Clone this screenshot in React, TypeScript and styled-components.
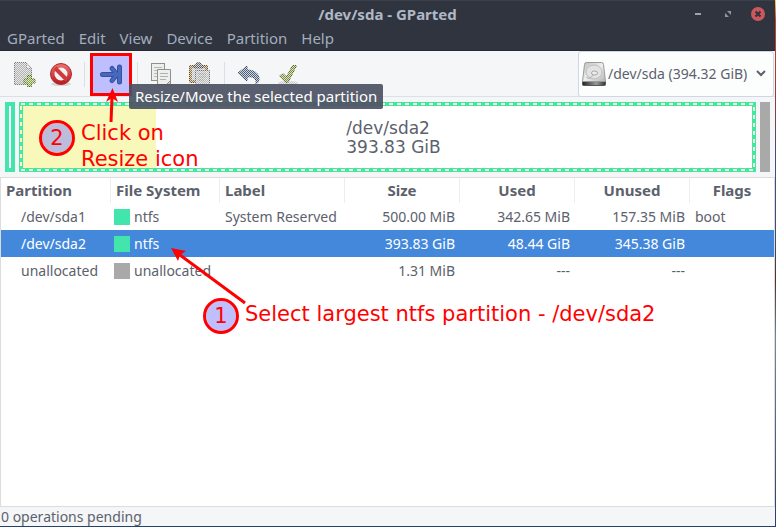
import React from "react";
import styled, { createGlobalStyle } from "styled-components";

const GREEN = "#42e5ac";
const GREY = "#a9a9a9";
const RED = "#ff0000";
const TEXT = "#5c616c";

const GlobalStyle = createGlobalStyle`
  *, *::before, *::after { box-sizing: border-box; }
  body {
    margin: 0;
    background: linear-gradient(#f4d95a 0, #c8452c 20px, #a33a2a 90px, #4a4a80 150px, #35507e 240px, #5f2a2a 280px, #6d8aa0 340px, #24406b 100%);
    font-family: "Noto Sans", "Open Sans", sans-serif;
    font-size: 14px;
    color: ${TEXT};
  }
  button, select { font: inherit; color: inherit; }
`;

const Window = styled.div`
  position: relative;
  display: flex;
  flex-direction: column;
  height: 100vh;
  border: 0 solid transparent;
  border-width: 0 1px 1px 0;
  background: #f5f6f7 padding-box;
  overflow: hidden;
`;

const TitleBar = styled.header`
  display: grid;
  grid-template-columns: 1fr auto 1fr;
  align-items: center;
  height: 28px;
  flex: none;
  padding-bottom: 2px;
  background: #2f343f;
  border-top: 1px solid #3a404c;
`;

const Title = styled.h1`
  grid-column: 2;
  margin: 0;
  font-size: 15px;
  line-height: 20px;
  font-weight: 700;
  color: #afb8c5;
`;

const WindowControls = styled.div`
  display: flex;
  justify-content: flex-end;
  gap: 14px;
  padding-right: 9px;
`;

const ControlButton = styled.button`
  display: block;
  width: 16px;
  height: 16px;
  padding: 0;
  border: 0;
  background: none;
  svg { display: block; }
`;

const MenuBar = styled.nav`
  display: flex;
  gap: 14px;
  height: 23px;
  flex: none;
  padding: 0 7px 2px;
  background: #2f343f;
  border-bottom: 1px solid #262a33;
  font-size: 15px;
`;

const MenuItem = styled.button`
  padding: 0;
  border: 0;
  background: none;
  color: #a3adbd;
  line-height: 20px;
`;

const Toolbar = styled.div`
  display: flex;
  align-items: flex-end;
  height: 46px;
  flex: none;
  padding: 0 0 0 3px;
  border-bottom: 1px solid #dbdfe7;
`;

const ToolButton = styled.button<{ $marked?: boolean }>`
  display: grid;
  place-items: center;
  width: ${(p) => (p.$marked ? 42 : 38)}px;
  height: 43px;
  padding: 0;
  border: ${(p) => (p.$marked ? `3px solid ${RED}` : "0")};
  background: ${(p) => (p.$marked ? "#bfbfff" : "none")};
  svg { display: block; overflow: visible; }
`;

const ToolDivider = styled.div`
  width: 1px;
  height: 25px;
  margin: 0 5px 9px;
  background: #dcdfe3;
`;

const TipAnchor = styled.div`
  position: relative;
`;

const Tooltip = styled.div`
  position: absolute;
  z-index: 2;
  top: 31px;
  left: 39px;
  padding: 0 6px;
  border-radius: 2px;
  background: rgba(75, 81, 98, 0.92);
  color: #ffffff;
  font-size: 15px;
  line-height: 25px;
  white-space: nowrap;
`;

const DevicePicker = styled.label`
  display: flex;
  align-items: center;
  align-self: stretch;
  margin: 0 1px -1px auto;
  padding: 0 6px 0 3px;
  border: 1px solid #cfd6e6;
  border-radius: 3px;
  background: #fcfefe;
  svg { display: block; }
`;

const DeviceSelect = styled.select`
  appearance: none;
  padding: 0 7px 0 1px;
  border: 0;
  background: none;
  line-height: 20px;
`;

const DiskMap = styled.section`
  position: relative;
  display: flex;
  gap: 4px;
  height: 80px;
  flex: none;
  padding: 5px;
`;

const SmallPartition = styled.div<{ $color: string; $solid?: boolean }>`
  width: 10px;
  flex: none;
  border: 4px solid ${(p) => p.$color};
  background: ${(p) => (p.$solid ? p.$color : "#ffffff")};
`;

const SelectedPartition = styled.div`
  position: relative;
  display: grid;
  flex: 1;
  border: 4px solid ${GREEN};
  background: #ffffff;
  > * { grid-area: 1 / 1; }
`;

const UsedSpace = styled.div`
  width: 18.2%;
  background: #f8f8ba;
`;

const PartitionLabel = styled.div`
  place-self: center;
  padding: 2px 0 0 12px;
  font-family: "DejaVu Sans", sans-serif;
  font-size: 17px;
  line-height: 19px;
`;

const SelectionDashes = styled.svg`
  position: absolute;
  inset: -4px;
  width: calc(100% + 8px);
  height: calc(100% + 8px);
  rect {
    x: 2px;
    y: 2px;
    width: calc(100% - 4px);
    height: calc(100% - 4px);
  }
`;

const TableFrame = styled.main`
  position: relative;
  flex: 1;
  min-height: 0;
  border: 1px solid #dcdcdc;
  background: #ffffff;
`;

const PartitionTable = styled.table`
  width: 100%;
  table-layout: fixed;
  border-collapse: separate;
  border-spacing: 0;
  line-height: 20px;
`;

const Column = styled.col<{ $width?: number }>`
  width: ${(p) => (p.$width ? `${p.$width}px` : "auto")};
`;

const HeaderCell = styled.th<{ $center?: boolean }>`
  height: 25px;
  padding: 0 5px 2px;
  border-right: 1px solid #ededed;
  text-align: ${(p) => (p.$center ? "center" : "left")};
  font-size: 15px;
  font-weight: 700;
  &:last-child { border-right: 0; }
`;

const Row = styled.tr<{ $selected?: boolean }>`
  height: 27px;
  color: ${(p) => (p.$selected ? "#ffffff" : TEXT)};
  background: ${(p) => (p.$selected ? "#4488dc" : "none")};
`;

const Cell = styled.td<{ $right?: boolean; $indent?: boolean }>`
  padding: 0 5px 0 ${(p) => (p.$indent ? 20 : 5)}px;
  text-align: ${(p) => (p.$right ? "right" : "left")};
  white-space: nowrap;
`;

const FileSystem = styled.div`
  display: flex;
  align-items: center;
  gap: 4px;
  margin-left: -2px;
`;

const Swatch = styled.span<{ $color: string }>`
  width: 16px;
  height: 16px;
  flex: none;
  background: ${(p) => p.$color};
`;

const StatusBar = styled.footer`
  height: 19px;
  flex: none;
  padding-left: 1px;
  line-height: 20px;
`;

const Arrows = styled.svg`
  position: absolute;
  z-index: 3;
  top: 0;
  left: 0;
  pointer-events: none;
`;

const Callout = styled.div<{ $x: number; $y: number; $single?: boolean }>`
  position: absolute;
  z-index: 2;
  left: ${(p) => p.$x}px;
  top: ${(p) => p.$y}px;
  display: flex;
  align-items: ${(p) => (p.$single ? "center" : "flex-start")};
  gap: 6px;
  color: ${RED};
  font-family: "DejaVu Sans", sans-serif;
  font-size: 21px;
  line-height: 26px;
  white-space: nowrap;
`;

const CalloutText = styled.span`
  padding-bottom: 4px;
`;

const StepNumber = styled.span`
  display: grid;
  place-items: center;
  width: 36px;
  height: 36px;
  border: 3px solid ${RED};
  border-radius: 50%;
  background: rgba(128, 128, 255, 0.5);
  background-clip: padding-box;
`;

const Icon = ({ children }: { children: React.ReactNode }) => (
  <svg width="26" height="25" viewBox="0 0 26 25" aria-hidden="true">{children}</svg>
);

/* Every other pixel is cut out of icons whose action is unavailable. */
const StippleDefs = () => (
  <defs>
    <pattern id="checks" width="2" height="2" patternUnits="userSpaceOnUse">
      <rect width="2" height="2" fill="#333333" />
      <rect width="1" height="1" fill="#ffffff" />
      <rect x="1" y="1" width="1" height="1" fill="#ffffff" />
    </pattern>
    <mask id="stipple" maskUnits="userSpaceOnUse" x="0" y="0" width="27" height="26">
      <rect width="27" height="26" fill="url(#checks)" />
    </mask>
  </defs>
);

const NewIcon = () => (
  <Icon>
    <StippleDefs />
    <g mask="url(#stipple)">
      <path d="M5.500 .500h12l5 6v16h-17z" fill="#b2b2b2" stroke="#7a7a7a" />
      <path d="M17.500 .500v6h5z" fill="#e8e8e8" stroke="#909090" />
      <path d="M18.500 13.500h4v3.500h3.500v4h-3.500v3.500h-4v-3.500h-3.500v-4h3.500z" fill="#86a63a" stroke="#4b6614" />
    </g>
  </Icon>
);

const DeleteIcon = () => (
  <Icon>
    <defs>
      <linearGradient id="stop" x1="0" y1="0" x2="0" y2="1">
        <stop offset="0" stopColor="#e96a6a" />
        <stop offset="1" stopColor="#bd1f22" />
      </linearGradient>
    </defs>
    <ellipse cx="14" cy="22" rx="10" ry="2" fill="#d4d5d6" />
    <circle cx="14" cy="12" r="8.500" fill="#f3f1f1" />
    <circle cx="14" cy="12" r="8.500" fill="none" stroke="url(#stop)" strokeWidth="4" />
    <path d="M8 6l12 12" stroke="#cf3a3c" strokeWidth="4" />
    <circle cx="14" cy="12" r="10.500" fill="none" stroke="#ae2a2c" />
  </Icon>
);

const ResizeIcon = () => (
  <Icon>
    <g fill="none" strokeLinecap="round" strokeLinejoin="round">
      <path d="M4.500 12.500h12M14 6.500l5 6-5 6M21.500 5v15" stroke="#35509c" strokeWidth="5" />
      <path d="M4.500 12.500h12M14 6.500l5 6-5 6M21.500 5v15" stroke="#4668bd" strokeWidth="3" />
    </g>
  </Icon>
);

const CopyIcon = () => (
  <Icon>
    <rect x="2.500" y="1.500" width="13" height="17" fill="#eeeeec" stroke="#8f918f" />
    <path d="M5 5.500h8M5 8.500h8M5 11.500h4M5 14.500h3" stroke="#b8b8b8" />
    <path d="M8.500 7.500h13v15h-13z" fill="#eeeeec" stroke="#8f918f" />
    <path d="M11 11.500h8M11 14.500h8M11 17.500h6" stroke="#b0b0b0" />
    <path d="M21.500 18.500l-4 4h4z" fill="#c9cac9" stroke="#8f918f" />
  </Icon>
);

const PasteIcon = () => (
  <Icon>
    <g mask="url(#stipple)">
      <rect x="2.500" y="3.500" width="18" height="17" rx="1" fill="#96743c" stroke="#65491c" />
      <rect x="5" y="6" width="13" height="12" fill="#c2c2c2" />
      <path d="M7 5V3h2a2 2 0 0 1 5 0h2v3H7z" fill="#666666" stroke="#444444" />
      <path d="M8.500 8.500h14v14h-14z" fill="#bcbcbc" stroke="#707070" />
      <path d="M11 12h8M11 15h8M11 18h6" stroke="#909090" />
    </g>
  </Icon>
);

const UndoIcon = () => (
  <Icon>
    <g mask="url(#stipple)">
      <path d="M2 11l9-7v4c8 0 12 4 12 9 0 2-1 4-3 5 1-6-3-8-9-7v4z" fill="#4d5f7a" stroke="#2f4260" strokeLinejoin="round" />
    </g>
  </Icon>
);

const ApplyIcon = () => (
  <Icon>
    <g mask="url(#stipple)">
      <ellipse cx="14" cy="21" rx="10" ry="2" fill="#c8c8c8" />
      <path d="M5.500 14l3.500-2.500 3.500 3.500L18.500 3.500h4L14 20.500h-2z" fill="#7c9038" stroke="#4b6118" />
    </g>
  </Icon>
);

const DiskIcon = () => (
  <svg width="25" height="25" viewBox="0 0 25 25" aria-hidden="true">
    <defs>
      <linearGradient id="case" x1="0" y1="0" x2="1" y2="1">
        <stop offset="0" stopColor="#bdbdbd" />
        <stop offset=".5" stopColor="#eeeeee" />
        <stop offset="1" stopColor="#b4b4b4" />
      </linearGradient>
      <linearGradient id="front">
        <stop offset="0" stopColor="#222222" />
        <stop offset=".6" stopColor="#999999" />
        <stop offset="1" stopColor="#333333" />
      </linearGradient>
    </defs>
    <path d="M.500 19.500h23v3a1 1 0 0 1-1 1h-21a1 1 0 0 1-1-1z" fill="url(#front)" stroke="#555555" />
    <path d="M4.500 .500h15a2 2 0 0 1 2 2l2 17H.500l2-17a2 2 0 0 1 2-2z" fill="url(#case)" stroke="#9a9a9a" />
    <ellipse cx="12" cy="10" rx="8" ry="7" fill="#e2e2e2" stroke="#bdbdbd" />
    <ellipse cx="12.500" cy="11" rx="3" ry="2" fill="#eeeeee" stroke="#a5a5a5" />
    <path d="M4.500 15.500c4 2 5-1 7-3" fill="none" stroke="#ababab" />
  </svg>
);

const menus = ["GParted", "Edit", "View", "Device", "Partition", "Help"];
const columns = [
  { title: "Partition", width: 110 },
  { title: "File System", width: 109 },
  { title: "Label", width: 125 },
  { title: "Size", width: 115, center: true },
  { title: "Used", width: 115, center: true },
  { title: "Unused", width: 115, center: true },
  { title: "Flags", center: true },
];
const partitions = [
  { name: "/dev/sda1", fs: "ntfs", color: GREEN, label: "System Reserved", size: "500.00 MiB", used: "342.65 MiB", unused: "157.35 MiB", flags: "boot" },
  { name: "/dev/sda2", fs: "ntfs", color: GREEN, label: "", size: "393.83 GiB", used: "48.44 GiB", unused: "345.38 GiB", flags: "" },
  { name: "unallocated", fs: "unallocated", color: GREY, label: "", size: "1.31 MiB", used: "---", unused: "---", flags: "" },
];

export default function App() {
  const [selected, setSelected] = React.useState("/dev/sda2");
  return (
    <>
      <GlobalStyle />
      <Window>
        <TitleBar>
          <Title>/dev/sda - GParted</Title>
          <WindowControls>
            <ControlButton aria-label="Minimize">
              <svg width="16" height="16"><path d="M5 8h6" stroke="#9aa3b1" strokeWidth="2" /></svg>
            </ControlButton>
            <ControlButton aria-label="Restore">
              <svg width="16" height="16" fill="#8e97a5">
                <path d="M7 5h4v4zM5 7v4h4z" />
              </svg>
            </ControlButton>
            <ControlButton aria-label="Close">
              <svg width="16" height="16">
                <circle cx="8" cy="8" r="7" fill="#cc575d" />
                <path d="M5.500 5.500l5 5M10.500 5.500l-5 5" stroke="#2f343f" strokeWidth="2" />
              </svg>
            </ControlButton>
          </WindowControls>
        </TitleBar>
        <MenuBar>
          {menus.map((m) => <MenuItem key={m}>{m}</MenuItem>)}
        </MenuBar>
        <Toolbar>
          <ToolButton aria-label="New" disabled><NewIcon /></ToolButton>
          <ToolButton aria-label="Delete"><DeleteIcon /></ToolButton>
          <ToolDivider />
          <TipAnchor>
            <ToolButton $marked aria-label="Resize/Move" aria-describedby="resize-tip"><ResizeIcon /></ToolButton>
            <Tooltip id="resize-tip" role="tooltip">Resize/Move the selected partition</Tooltip>
          </TipAnchor>
          <ToolDivider />
          <ToolButton aria-label="Copy"><CopyIcon /></ToolButton>
          <ToolButton aria-label="Paste" disabled><PasteIcon /></ToolButton>
          <ToolDivider />
          <ToolButton aria-label="Undo" disabled><UndoIcon /></ToolButton>
          <ToolButton aria-label="Apply" disabled><ApplyIcon /></ToolButton>
          <DevicePicker>
            <DiskIcon />
            <DeviceSelect aria-label="Device">
              <option>/dev/sda (394.32 GiB)</option>
            </DeviceSelect>
            <svg width="12" height="12" aria-hidden="true">
              <path d="M2 3l4 4 4-4" fill="none" stroke={TEXT} strokeWidth="2" />
            </svg>
          </DevicePicker>
        </Toolbar>
        <DiskMap>
          <SmallPartition $color={GREEN} />
          <SelectedPartition>
            <UsedSpace />
            <PartitionLabel>/dev/sda2<br />393.83 GiB</PartitionLabel>
            <SelectionDashes aria-hidden="true">
              <rect fill="none" stroke="#f8f8ba" strokeWidth="2" strokeDasharray="4 4" />
            </SelectionDashes>
          </SelectedPartition>
          <SmallPartition $color={GREY} $solid />
          <Callout $x={39} $y={23}>
            <StepNumber>2</StepNumber>
            <CalloutText>Click on<br />Resize icon</CalloutText>
          </Callout>
        </DiskMap>
        <TableFrame>
          <PartitionTable>
            <colgroup>
              {columns.map((c) => <Column key={c.title} $width={c.width} />)}
            </colgroup>
            <thead>
              <tr>
                {columns.map((c) => <HeaderCell key={c.title} $center={c.center}>{c.title}</HeaderCell>)}
              </tr>
            </thead>
            <tbody>
              {partitions.map((p) => (
                <Row key={p.name} $selected={p.name === selected} onClick={() => setSelected(p.name)}>
                  <Cell $indent>{p.name}</Cell>
                  <Cell><FileSystem><Swatch $color={p.color} />{p.fs}</FileSystem></Cell>
                  <Cell>{p.label}</Cell>
                  <Cell $right>{p.size}</Cell>
                  <Cell $right>{p.used}</Cell>
                  <Cell $right>{p.unused}</Cell>
                  <Cell>{p.flags}</Cell>
                </Row>
              ))}
            </tbody>
          </PartitionTable>
          <Callout $x={202} $y={120} $single>
            <StepNumber>1</StepNumber>
            <CalloutText>Select largest ntfs partition - /dev/sda2</CalloutText>
          </Callout>
        </TableFrame>
        <StatusBar>0 operations pending</StatusBar>
        <Arrows width="260" height="310" aria-hidden="true">
          <g stroke={RED} strokeWidth="3" fill={RED}>
            <path d="M111 122L112 98" />
            <path d="M112.500 88L118 102L112 98L106 102z" stroke="none" />
            <path d="M245 303L180 255" />
            <path d="M171 248L186 251L180 255L178 261z" stroke="none" />
          </g>
        </Arrows>
      </Window>
    </>
  );
}
